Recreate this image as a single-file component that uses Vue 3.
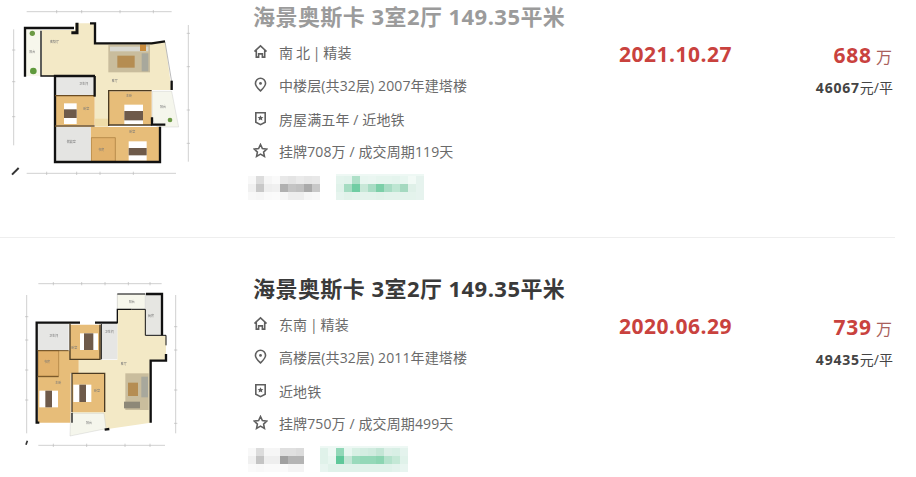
<script setup>
const deals = [
  {
    title: '海景奥斯卡 3室2厅 149.35平米',
    visited: true,
    plan: 'a',
    house: '南 北 | 精装',
    floor: '中楼层(共32层) 2007年建塔楼',
    tag: '房屋满五年 / 近地铁',
    cycle: '挂牌708万 / 成交周期119天',
    date: '2021.10.27',
    price: '688',
    unit: '46067',
    grayCols: 9,
    gray: ['f8f8f8', 'dcdcdc', 'f6f6f6', 'fafafa', 'e8e8e8', 'e4e4e4', 'eaeaea', 'e6e6e6', 'e8e8e8',
      'f0f0f0', 'c8c8c8', 'eeeeee', 'f0f0f0', 'b0b0b0', 'c4c4c4', 'c0c0c0', 'aaaaaa', 'c8c8c8',
      'f8f8f8', 'f6f6f6', 'fafafa', 'fbfbfb', 'f6f6f6', 'eeeeee', 'eeeeee', 'f6f6f6', 'f8f8f8'],
    greenCols: 11,
    green: ['e4f4ed', 'e2f3ec', 'aee0c8', 'e8f6f0', 'eaf6f1', 'e6f5ee', 'e6f5ee', 'e4f4ed', 'e8f6f0', 'f2faf6', 'e6f3ee',
      'e0f2ea', 'a5dcc2', '70cda3', 'c8e8d8', 'a8dcc4', '7ccfa8', 'a8dcc4', 'bde6d2', 'a5d9c0', 'dff0e8', 'e6f3ee',
      'e6f4ee', 'e2f2ea', 'e4f3ec', 'e4f3ec', 'e4f3ec', 'e2f2ea', 'e4f3ec', 'e4f3ec', 'e4f3ec', 'e4f3ec', 'e6f3ee']
  },
  {
    title: '海景奥斯卡 3室2厅 149.35平米',
    visited: false,
    plan: 'b',
    house: '东南 | 精装',
    floor: '高楼层(共32层) 2011年建塔楼',
    tag: '近地铁',
    cycle: '挂牌750万 / 成交周期499天',
    date: '2020.06.29',
    price: '739',
    unit: '49435',
    grayCols: 7,
    gray: ['f8f8f8', 'dcdcdc', 'f6f6f6', 'f6f6f6', 'e0e0e0', 'e0e0e0', 'dcdcdc',
      'f0f0f0', 'c4c4c4', 'eeeeee', 'eeeeee', 'a0a0a0', 'b4b4b4', 'b4b4b4',
      'fafafa', 'f8f8f8', 'fafafa', 'fafafa', 'fafafa', 'f4f4f4', 'f4f4f4'],
    greenCols: 11,
    green: ['e0f2ea', 'eef8f4', '92d8b8', 'e8f6f0', 'd8f0e4', 'd4ede2', 'd0ebdf', 'c4e6d6', 'dcefe7', 'd8efe5', 'e4f3ed',
      'e0f2ea', 'e8f6f0', '5fc89a', 'c4e6d6', '9adabc', '94d8b8', '94d8b8', '8cd5b2', 'b4e2cc', 'c4e8d6', 'e0f2ea',
      'e8f5f0', 'e0f2ea', 'e0f2ea', 'e0f2ea', 'e0f2ea', 'e0f2ea', 'e0f2ea', 'e0f2ea', 'e0f2ea', 'e4f3ed', 'e8f5f0']
  }
]
</script>

<template>
  <div class="page">
    <div class="list">
      <div class="deal" v-for="deal in deals" :key="deal.date">
        <div class="plan">
          <svg v-if="deal.plan === 'a'" class="plan-svg" viewBox="0 0 720 621" width="240" height="207">
            <g stroke="#b9b9b9" stroke-width="2" fill="none">
              <path d="M80 35H515M80 520H528M41 88V436M565 75V485" />
              <path d="M170 30v10M245 30v10M360 30v10M460 30v10M140 515v10M230 515v10M300 515v10M400 515v10M36 150h10M36 245h10M36 350h10M560 100h10M560 200h10M560 330h10M560 430h10" />
            </g>
            <path d="M125 90H225V70H282L287 130L495 125L515 270H325V378H285V232H165L125 226Z" fill="#f3e9c6" />
            <rect x="76" y="88" width="48" height="140" fill="#f7f7ec" />
            <path d="M165 232H284V287H165Z" fill="#e6e6e4" />
            <path d="M165 288H284V376H165Z" fill="#e7bd79" />
            <path d="M327 274H455V374H327Z" fill="#e7bd79" />
            <path d="M457 274H515L536 381H472L457 358Z" fill="#f5f6ec" stroke="#bbb" />
            <path d="M272 381H478V486H272Z" fill="#e7bd79" />
            <path d="M274 413H346V484H274Z" fill="#e2b26c" stroke="#a5793a" stroke-width="2" />
            <path d="M165 381H272V486H165Z" fill="#e4e4e2" />
            <path d="M285 356H325V380H285Z" fill="#efdca8" />
            <path d="M495 125L515 245" stroke="#999" stroke-width="2" fill="none" />
            <circle cx="97" cy="100" r="8" fill="#6c9a45" />
            <circle cx="100" cy="213" r="10" fill="#5f9a3c" />
            <circle cx="510" cy="360" r="7" fill="#6c9a45" />
            <!-- sofa -->
            <rect x="325" y="135" width="125" height="82" fill="#c9bd9d" />
            <rect x="352" y="167" width="52" height="36" fill="#b58d52" />
            <rect x="330" y="140" width="115" height="14" fill="#d8d8d0" />
            <rect x="425" y="160" width="20" height="54" fill="#a8a89c" />
            <rect x="420" y="133" width="18" height="20" fill="#c98b3c" />
            <!-- beds -->
            <g>
              <rect x="373" y="314" width="56" height="60" fill="#fff" />
              <rect x="373" y="333" width="56" height="28" fill="#6e5a4a" />
              <rect x="192" y="310" width="38" height="62" fill="#fff" />
              <rect x="192" y="328" width="38" height="26" fill="#6e5a4a" />
              <rect x="386" y="424" width="54" height="58" fill="#fff" />
              <rect x="386" y="444" width="54" height="22" fill="#6e5a4a" />
            </g>
            <!-- walls -->
            <g stroke="#111" stroke-width="7" fill="none">
              <path d="M75 230V84H222" />
              <path d="M231 68V98H214" stroke-width="9" />
              <path d="M270 70H285V130H455L495 124" />
              <path d="M515 242V270" />
              <path d="M123 92V228H165" stroke-width="4" />
              <path d="M285 228H165V486H480V380" />
              <path d="M165 287H284M165 378H284" stroke="#6b4c22" stroke-width="4" />
              <path d="M284 228V290" />
              <path d="M326 378V272H455" stroke="#4b3b22" stroke-width="4" />
              <path d="M326 375H455" stroke="#4b3b22" stroke-width="4" />
              <path d="M456 352V374H496" />
            </g>
            <path d="M36 524L56 504" stroke="#333" stroke-width="6" />
            <g class="room-label">
              <text x="150" y="130">客餐厅</text>
              <text x="335" y="245">客厅</text>
              <text x="378" y="292">主卧</text>
              <text x="250" y="330">卧室</text>
              <text x="388" y="400">卧室</text>
              <text x="200" y="430">储藏室</text>
              <text x="295" y="452">书房</text>
              <text x="480" y="325">阳台</text>
              <text x="238" y="255">卫生间</text>
              <text x="88" y="160">阳台</text>
            </g>
          </svg>

          <svg v-else class="plan-svg" viewBox="0 0 720 621" width="240" height="207">
            <g transform="translate(0 -6)">
              <g stroke="#b9b9b9" stroke-width="2" fill="none">
                <path d="M115 41H485M115 526H495M80 75V490M527 75V490" />
                <path d="M160 36v10M245 36v10M315 36v10M385 36v10M450 36v10M160 521v10M260 521v10M375 521v10M450 521v10M75 140h10M75 210h10M75 300h10M75 390h10M522 170h10M522 240h10M522 360h10M522 460h10" />
              </g>
              <path d="M352 118H437V198H498V270H452V458L318 478H216V310H236V270H352Z" fill="#f3e9c6" />
              <path d="M352 72H436V118H352Z" fill="#f7f7ec" stroke="#999" />
              <path d="M438 72H486V196H438Z" fill="#e6e6e2" />
              <path d="M112 160H206V240H112Z" fill="#e6e6e4" />
              <path d="M210 164H302V268H210Z" fill="#e7bd79" />
              <path d="M304 162H352V268H304Z" fill="#e6e6e4" />
              <path d="M114 242H236V310H212V458H114Z" fill="#e7bd79" />
              <path d="M114 242H176V318H114Z" fill="#e2b26c" stroke="#a5793a" stroke-width="2" />
              <path d="M216 310H314V426H216Z" fill="#e7bd79" />
              <path d="M212 430H312L318 476L210 498Z" fill="#f5f6ec" stroke="#bbb" />
              <!-- sofa -->
              <rect x="376" y="310" width="70" height="110" fill="#c9bd9d" />
              <rect x="384" y="338" width="30" height="40" fill="#b58d52" />
              <rect x="372" y="395" width="48" height="20" fill="#8d8878" />
              <rect x="424" y="320" width="20" height="62" fill="#a8a89c" />
              <!-- beds -->
              <g>
                <rect x="240" y="190" width="54" height="50" fill="#fff" />
                <rect x="252" y="190" width="28" height="50" fill="#6e5a4a" />
                <rect x="118" y="362" width="56" height="50" fill="#fff" />
                <rect x="136" y="362" width="20" height="50" fill="#6e5a4a" />
                <rect x="220" y="344" width="54" height="52" fill="#fff" />
                <rect x="238" y="344" width="20" height="52" fill="#6e5a4a" />
              </g>
              <!-- walls -->
              <g stroke="#111" stroke-width="7" fill="none">
                <path d="M352 72H436" stroke-width="3" />
                <path d="M438 72H486V196" />
                <path d="M352 160V118H394" stroke-width="4" />
                <path d="M394 118H436V196H498V226" stroke-width="3" />
                <path d="M498 252V272H452V458" />
                <path d="M352 158H285M240 158H110V458H118" />
                <path d="M210 160V268H300V164" stroke="#4b3b22" stroke-width="4" />
                <path d="M304 162V268" stroke-width="3" />
                <path d="M112 242H206M112 320H176" stroke="#6b4c22" stroke-width="3" />
                <path d="M216 426V310H314V426" stroke="#4b3b22" stroke-width="4" />
                <path d="M216 428V458" stroke-width="4" />
                <path d="M314 479L328 477" />
              </g>
              <path d="M78 524L82 512" stroke="#333" stroke-width="5" />
              <g class="room-label">
                <text x="148" y="200">卫生间</text>
                <text x="314" y="190">卫生间</text>
                <text x="214" y="238">卧室</text>
                <text x="362" y="284">客厅</text>
                <text x="132" y="280">书房</text>
                <text x="166" y="342">主卧</text>
                <text x="282" y="366">卧室</text>
                <text x="258" y="462">阳台</text>
                <text x="386" y="98">阳台</text>
                <text x="444" y="140">厨房</text>
              </g>
            </g>
          </svg>
        </div>

        <div class="info">
          <div class="title" :class="{ visited: deal.visited }">{{ deal.title }}</div>

          <div class="line house">
            <svg class="icon" viewBox="0 0 16 16">
              <path d="M1.5 8L8 2l6.5 6M3.5 6.5V14H6V10.5h4V14h2.5V6.5" />
            </svg>
            <span>{{ deal.house }}</span>
          </div>
          <div class="line">
            <svg class="icon" viewBox="0 0 16 16">
              <path d="M8 14.8C5 11.8 2.6 9.6 2.6 6.8a5.4 5.4 0 0 1 10.8 0c0 2.8-2.4 5-5.4 8z" />
              <circle class="dot" cx="8" cy="6.8" r="1.5" />
            </svg>
            <span>{{ deal.floor }}</span>
          </div>
          <div class="line tag-line">
            <svg class="icon" viewBox="0 0 16 16">
              <path d="M3 1.8H13V12L8 14.6 3 12Z" />
              <path class="dot" d="M8 4.4l1 2 2.1.2-1.6 1.4.5 2.1L8 9l-2 1.1.5-2.1-1.6-1.4L7 6.4z" />
            </svg>
            <span>{{ deal.tag }}</span>
          </div>
          <div class="line">
            <svg class="icon" viewBox="0 0 16 16">
              <path d="M8 1.6l2 4.3 4.7.6-3.4 3.2.9 4.6L8 11.9l-4.2 2.4.9-4.6L1.3 6.5 6 5.9z" />
            </svg>
            <span>{{ deal.cycle }}</span>
          </div>

          <div class="tags">
            <div class="mosaic" :style="{ gridTemplateColumns: `repeat(${deal.grayCols}, 8px)` }">
              <i v-for="(c, i) in deal.gray" :key="i" :style="{ background: '#' + c }"></i>
            </div>
            <div class="mosaic green" :style="{ gridTemplateColumns: `repeat(${deal.greenCols}, 8px)` }">
              <i v-for="(c, i) in deal.green" :key="i" :style="{ background: '#' + c }"></i>
            </div>
          </div>
        </div>

        <div class="date">{{ deal.date }}</div>

        <div class="prices">
          <div class="price"><b>{{ deal.price }}</b> <span>万</span></div>
          <div class="unit"><b>{{ deal.unit }}</b>元/平</div>
        </div>
      </div>
    </div>
  </div>
</template>

<style scoped>
.page {
  width: 916px;
  height: 477px;
  overflow: hidden;
  background: #fff;
  font-family: "Open Sans", "Noto Sans CJK SC", sans-serif;
}
.list {
  width: 895px;
  margin-top: -34px;
}
.deal {
  display: flex;
  height: 272px;
  box-sizing: border-box;
  padding-top: 36px;
  border-bottom: 1px solid #eee;
}
.plan {
  width: 253px;
  flex: none;
  margin-top: -2px;
}
.plan-svg {
  display: block;
  filter: blur(0.6px);
}
.room-label text {
  font-size: 9px;
  fill: #777;
}
.info {
  width: 366px;
  flex: none;
}
.title {
  height: 28px;
  line-height: 28px;
  margin-bottom: 5px;
  font-size: 22px;
  font-weight: 700;
  letter-spacing: 0.45px;
  color: #3a3a3a;
  white-space: nowrap;
}
.title.visited {
  color: #9b9b9b;
}
.line {
  display: flex;
  align-items: center;
  gap: 11px;
  height: 33px;
  box-sizing: border-box;
  font-size: 14px;
  letter-spacing: 0.12px;
  color: #6a6a6a;
  white-space: nowrap;
}
.house {
  word-spacing: -1px;
}
.tag-line {
  padding-top: 2px;
}
.icon {
  width: 15px;
  height: 15px;
  flex: none;
  fill: none;
  stroke: #5f5f5f;
  stroke-width: 1.7;
}
.icon .dot {
  fill: #5f5f5f;
  stroke: none;
}
.tags {
  display: flex;
  margin: 9px 0 0 -5px;
  gap: 16px;
}
.mosaic {
  display: grid;
  grid-auto-rows: 8px;
}
.green {
  box-shadow: 0 -2px 0 #eef8f4;
}
.date {
  width: 180px;
  flex: none;
  margin-top: 37px;
  height: 30px;
  line-height: 30px;
  font-size: 21px;
  font-weight: 700;
  letter-spacing: 0.5px;
  color: #c9423e;
}
.prices {
  flex: 1;
  margin-top: 38px;
  padding-right: 3px;
  text-align: right;
}
.price {
  height: 30px;
  line-height: 30px;
  color: #c9423e;
  white-space: nowrap;
}
.price b {
  font-size: 21px;
  letter-spacing: 0.8px;
}
.price span {
  font-size: 16px;
  color: #a9615c;
}
.unit {
  margin-top: 3px;
  margin-right: -1px;
  line-height: 30px;
  font-size: 14px;
  color: #444;
  white-space: nowrap;
}
.unit b {
  letter-spacing: 0.8px;
}
</style>

<style>
html, body {
  margin: 0;
  background: #fff;
}
</style>
